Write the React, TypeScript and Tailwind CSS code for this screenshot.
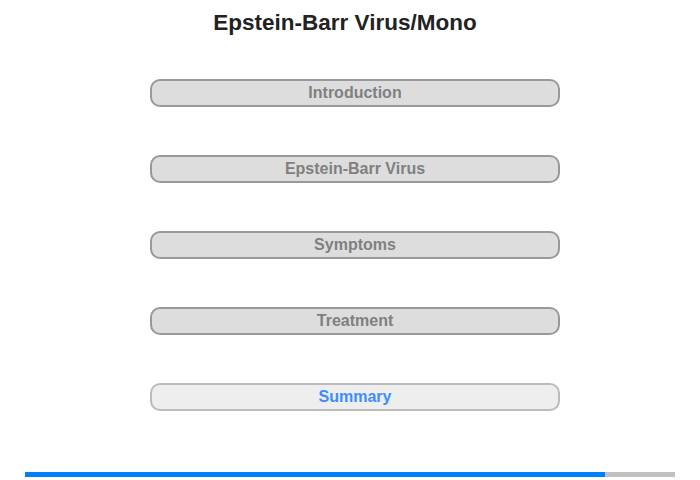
const sections = [
  { label: 'Introduction', current: false },
  { label: 'Epstein-Barr Virus', current: false },
  { label: 'Symptoms', current: false },
  { label: 'Treatment', current: false },
  { label: 'Summary', current: true },
];

export default function App() {
  return (
    <div className="w-[700px] h-[480px] bg-white flex flex-col font-['Liberation_Sans',Arial,sans-serif]">
      <h1 className="text-center text-[22.5px] font-bold text-[#222] pt-[10px] pr-[10px] leading-[26px]">
        Epstein-Barr Virus/Mono
      </h1>

      {/* Menu */}
      <div className="flex flex-col items-center gap-[48px] mt-[43px] pl-[10px]">
        {sections.map(s => (
          <button
            key={s.label}
            className={`w-[410px] h-[28px] rounded-[10px] border-2 text-[16px] font-bold leading-none ${
              s.current
                ? 'bg-[#eeeeee] border-[#bbbbbb] text-[#3c8dff]'
                : 'bg-[#dddddd] border-[#999999] text-[#808080]'
            }`}
          >
            {s.label}
          </button>
        ))}
      </div>

      {/* Progress bar */}
      <div className="mt-auto mb-[3px] mx-[25px] h-[5px] bg-[#c0c0c0] flex">
        <div className="w-[580px] h-full bg-[#007fff]" />
      </div>
    </div>
  );
}
